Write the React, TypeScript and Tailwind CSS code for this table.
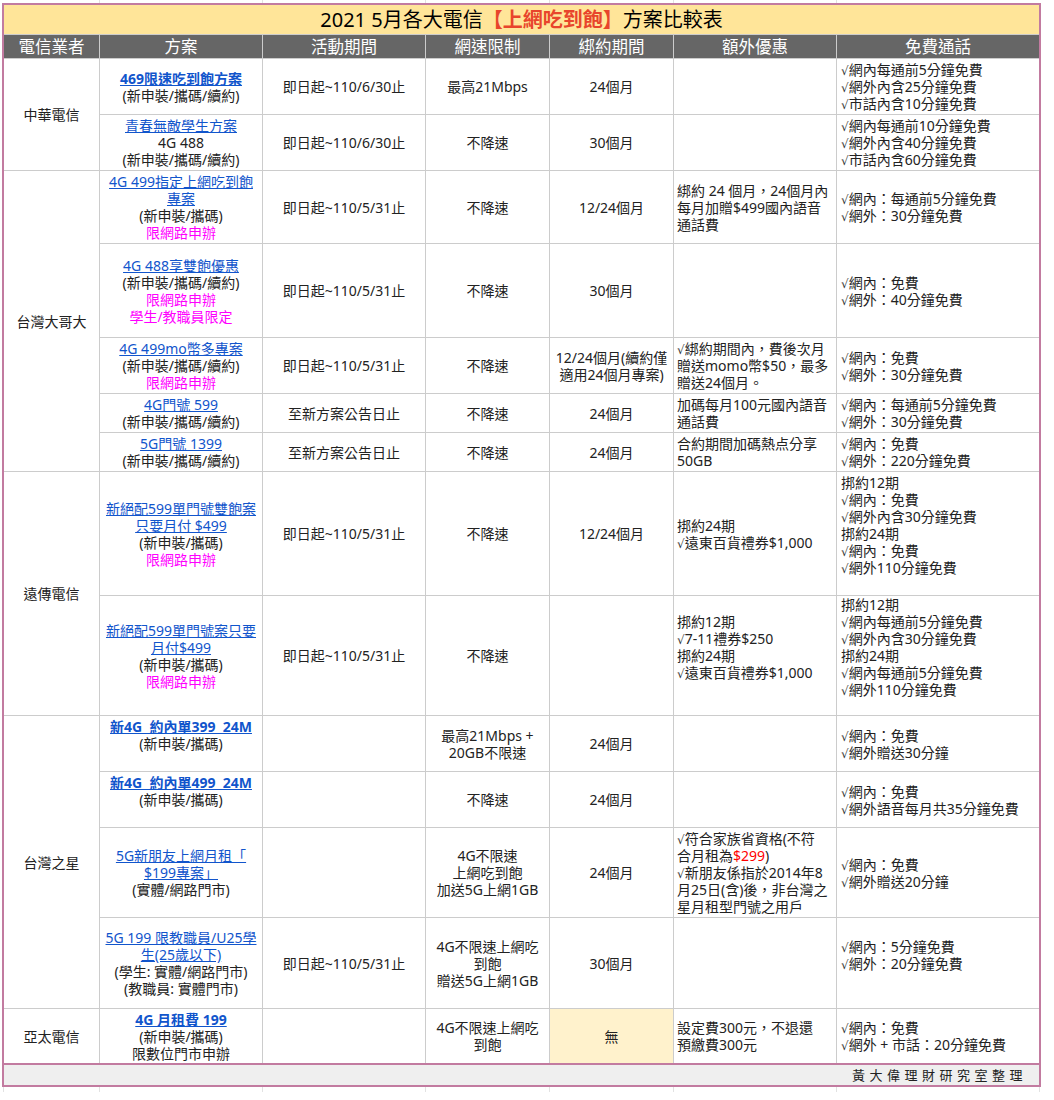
import React from 'react';

type Line = React.ReactNode;

function Ck() {
  return <span className="font-['DejaVu_Sans'] text-[12px] text-[#333]">√</span>;
}

function A({ children, b }: { children: React.ReactNode; b?: boolean }) {
  return <span className={`text-[#1155cc] underline ${b ? 'font-bold' : ''}`}>{children}</span>;
}

function M({ children }: { children: React.ReactNode }) {
  return <span className="text-[#ff00ff]">{children}</span>;
}

function Lines({ lines }: { lines: Line[] }) {
  return (
    <>
      {lines.map((l, i) => (
        <div key={i} className="whitespace-nowrap h-[17px]">
          {typeof l === 'string' && l.startsWith('√') ? (
            <>
              <Ck />
              {l.slice(1)}
            </>
          ) : (
            l
          )}
        </div>
      ))}
    </>
  );
}

// centered cell
function C({ lines = [], className = '' }: { lines?: Line[]; className?: string }) {
  return (
    <div className={`bg-white flex flex-col justify-center items-center text-center ${className}`}>
      <Lines lines={lines} />
    </div>
  );
}

// left aligned cell
function Lc({ lines = [], pad = 'pl-[3px]' }: { lines?: Line[]; pad?: string }) {
  return (
    <div className={`bg-white flex flex-col justify-center items-start text-left ${pad}`}>
      <Lines lines={lines} />
    </div>
  );
}

const headers = ['電信業者', '方案', '活動期間', '網速限制', '綁約期間', '額外優惠', '免費通話'];

export default function App() {
  return (
    <div className="bg-white w-[1054px] h-[1100px] text-[#222] text-[14px] leading-[17px] font-['Noto_Sans','Noto_Sans_CJK_TC',sans-serif]">
      {/* spreadsheet gridline stubs above the table */}
      <div className="flex h-[3px]">
        <div className="w-[99px]" />
        <div className="w-[163px] border-l border-[#e2e2e2]" />
        <div className="w-[163px] border-l border-[#e2e2e2]" />
        <div className="w-[124px] border-l border-[#e2e2e2]" />
        <div className="w-[124px] border-l border-[#e2e2e2]" />
        <div className="w-[163px] border-l border-[#e2e2e2]" />
        <div className="w-[204px] border-l border-[#e2e2e2]" />
      </div>

      <div className="ml-[2px] w-[1039px] border-2 border-[#c27ba0]">
        <div className="grid gap-px bg-[#cccccc] grid-cols-[95px_162px_162px_123px_123px_162px_202px] grid-rows-[29px_23px_55px_55px_72px_93px_55px_38px_38px_123px_119px_55px_55px_89px_90px_54px]">
          {/* title */}
          <div className="col-span-7 bg-[#ffe599] flex items-center justify-center text-[20px] leading-[24px] text-black">
            <span>2021 5月各大電信</span>
            <span className="text-[#e8452c] font-bold">【上網吃到飽】</span>
            <span>方案比較表</span>
          </div>

          {/* header */}
          {headers.map((h) => (
            <div key={h} className="bg-[#666666] text-white text-[16.5px] leading-[20px] flex items-center justify-center">
              {h}
            </div>
          ))}

          {/* 中華電信 */}
          <C className="row-span-2" lines={['中華電信']} />
          <C lines={[<A b>469限速吃到飽方案</A>, '(新申裝/攜碼/續約)']} />
          <C lines={['即日起~110/6/30止']} />
          <C lines={['最高21Mbps']} />
          <C lines={['24個月']} />
          <C />
          <Lc pad="pl-[4px]" lines={['√網內每通前5分鐘免費', '√網外內含25分鐘免費', '√市話內含10分鐘免費']} />

          <C lines={[<A>青春無敵學生方案</A>, '4G 488', '(新申裝/攜碼/續約)']} />
          <C lines={['即日起~110/6/30止']} />
          <C lines={['不降速']} />
          <C lines={['30個月']} />
          <C />
          <Lc pad="pl-[4px]" lines={['√網內每通前10分鐘免費', '√網外內含40分鐘免費', '√市話內含60分鐘免費']} />

          {/* 台灣大哥大 */}
          <C className="row-span-5" lines={['台灣大哥大']} />
          <C lines={[<A>4G 499指定上網吃到飽</A>, <A>專案</A>, '(新申裝/攜碼)', <M>限網路申辦</M>]} />
          <C lines={['即日起~110/5/31止']} />
          <C lines={['不降速']} />
          <C lines={['12/24個月']} />
          <Lc lines={['綁約 24 個月，24個月內', '每月加贈$499國內語音', '通話費']} />
          <Lc pad="pl-[4px]" lines={['√網內：每通前5分鐘免費', '√網外：30分鐘免費']} />

          <C lines={[<A>4G 488享雙飽優惠</A>, '(新申裝/攜碼/續約)', <M>限網路申辦</M>, <M>學生/教職員限定</M>]} />
          <C lines={['即日起~110/5/31止']} />
          <C lines={['不降速']} />
          <C lines={['30個月']} />
          <C />
          <Lc pad="pl-[4px]" lines={['√網內：免費', '√網外：40分鐘免費']} />

          <C lines={[<A>4G 499mo幣多專案</A>, '(新申裝/攜碼/續約)', <M>限網路申辦</M>]} />
          <C lines={['即日起~110/5/31止']} />
          <C lines={['不降速']} />
          <C lines={['12/24個月(續約僅', '適用24個月專案)']} />
          <Lc lines={['√綁約期間內，費後次月', '贈送momo幣$50，最多', '贈送24個月。']} />
          <Lc pad="pl-[4px]" lines={['√網內：免費', '√網外：30分鐘免費']} />

          <C lines={[<A>4G門號 599</A>, '(新申裝/攜碼/續約)']} />
          <C lines={['至新方案公告日止']} />
          <C lines={['不降速']} />
          <C lines={['24個月']} />
          <Lc lines={['加碼每月100元國內語音', '通話費']} />
          <Lc pad="pl-[4px]" lines={['√網內：每通前5分鐘免費', '√網外：30分鐘免費']} />

          <C lines={[<A>5G門號 1399</A>, '(新申裝/攜碼/續約)']} />
          <C lines={['至新方案公告日止']} />
          <C lines={['不降速']} />
          <C lines={['24個月']} />
          <Lc lines={['合約期間加碼熱点分享', '50GB']} />
          <Lc pad="pl-[4px]" lines={['√網內：免費', '√網外：220分鐘免費']} />

          {/* 遠傳電信 */}
          <C className="row-span-2" lines={['遠傳電信']} />
          <C lines={[<A>新絕配599單門號雙飽案</A>, <A>只要月付 $499</A>, '(新申裝/攜碼)', <M>限網路申辦</M>]} />
          <C lines={['即日起~110/5/31止']} />
          <C lines={['不降速']} />
          <C lines={['12/24個月']} />
          <Lc lines={['挷約24期', '√遠東百貨禮券$1,000']} />
          <Lc pad="pl-[4px]" lines={['挷約12期', '√網內：免費', '√網外內含30分鐘免費', '挷約24期', '√網內：免費', '√網外110分鐘免費', '']} />

          <C lines={[<A>新絕配599單門號案只要</A>, <A>月付$499</A>, '(新申裝/攜碼)', <M>限網路申辦</M>]} />
          <C lines={['即日起~110/5/31止']} />
          <C lines={['不降速']} />
          <C />
          <Lc lines={['挷約12期', '√7-11禮券$250', '挷約24期', '√遠東百貨禮券$1,000', '']} />
          <Lc pad="pl-[4px]" lines={['挷約12期', '√網內每通前5分鐘免費', '√網外內含30分鐘免費', '挷約24期', '√網內每通前5分鐘免費', '√網外110分鐘免費', '']} />

          {/* 台灣之星 */}
          <C className="row-span-4" lines={['台灣之星']} />
          <C lines={[<A b>新4G&nbsp;&nbsp;約內單399&nbsp;&nbsp;24M</A>, '(新申裝/攜碼)', '']} />
          <C />
          <C lines={['最高21Mbps +', '20GB不限速']} />
          <C lines={['24個月']} />
          <C />
          <Lc pad="pl-[4px]" lines={['√網內：免費', '√網外贈送30分鐘']} />

          <C lines={[<A b>新4G&nbsp;&nbsp;約內單499&nbsp;&nbsp;24M</A>, '(新申裝/攜碼)', '']} />
          <C />
          <C lines={['不降速']} />
          <C lines={['24個月']} />
          <C />
          <Lc pad="pl-[4px]" lines={['√網內：免費', '√網外語音每月共35分鐘免費']} />

          <C lines={[<A>5G新朋友上網月租「</A>, <A>$199專案」</A>, '(實體/網路門市)']} />
          <C />
          <C lines={['4G不限速', '上網吃到飽', '加送5G上網1GB']} />
          <C lines={['24個月']} />
          <Lc
            lines={[
              '√符合家族省資格(不符',
              <>
                合月租為<span className="text-[#ff0000]">$299</span>)
              </>,
              '√新朋友係指於2014年8',
              '月25日(含)後，非台灣之',
              '星月租型門號之用戶',
            ]}
          />
          <Lc pad="pl-[4px]" lines={['√網內：免費', '√網外贈送20分鐘']} />

          <C lines={[<A>5G 199 限教職員/U25學</A>, <A>生(25歲以下)</A>, '(學生: 實體/網路門市)', '(教職員: 實體門市)']} />
          <C lines={['即日起~110/5/31止']} />
          <C lines={['4G不限速上網吃', '到飽', '贈送5G上網1GB']} />
          <C lines={['30個月']} />
          <C />
          <Lc pad="pl-[4px]" lines={['√網內：5分鐘免費', '√網外：20分鐘免費', '']} />

          {/* 亞太電信 */}
          <C lines={['亞太電信']} />
          <C lines={[<A b>4G 月租費 199</A>, '(新申裝/攜碼)', '限數位門市申辦']} />
          <C />
          <C lines={['4G不限速上網吃', '到飽']} />
          <C className="!bg-[#fff2cc]" lines={['無']} />
          <Lc lines={['設定費300元，不退還', '預繳費300元']} />
          <Lc pad="pl-[4px]" lines={['√網內：免費', '√網外 + 市話：20分鐘免費']} />
        </div>

        {/* footer */}
        <div className="border-t-2 border-[#c27ba0] bg-[#efefef] h-[22px] flex items-center justify-end pr-[12px] text-[13px] tracking-[4.5px] text-[#222]">
          黃大偉理財研究室整理
        </div>
      </div>

      {/* gridline stubs below the table */}
      <div className="flex h-[5px]">
        <div className="w-[3px]" />
        <div className="w-[96px] border-l border-[#e2e2e2]" />
        <div className="w-[163px] border-l border-[#e2e2e2]" />
        <div className="w-[163px] border-l border-[#e2e2e2]" />
        <div className="w-[124px] border-l border-[#e2e2e2]" />
        <div className="w-[124px] border-l border-[#e2e2e2]" />
        <div className="w-[163px] border-l border-[#e2e2e2]" />
        <div className="w-[203px] border-l border-[#e2e2e2]" />
        <div className="w-[1px] border-l border-[#e2e2e2]" />
      </div>
    </div>
  );
}
